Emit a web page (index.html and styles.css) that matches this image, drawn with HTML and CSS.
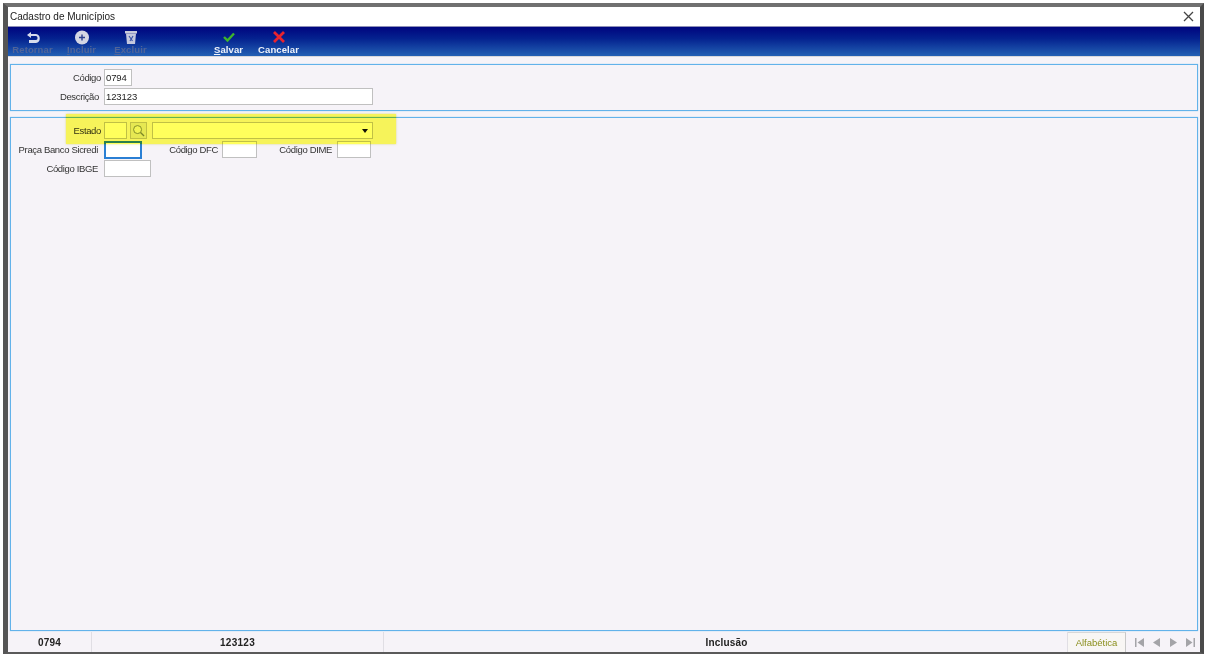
FILE: index.html
```html
<!DOCTYPE html>
<html lang="pt">
<head>
<meta charset="utf-8">
<title>Cadastro de Municípios</title>
<link rel="stylesheet" href="styles.css">
</head>
<body>
<div class="frame">
  <div class="window">
    <header class="titlebar">
      <span>Cadastro de Municípios</span>
      <svg class="close" width="11" height="11" viewBox="0 0 11 11"><path d="M1 1l9 9M10 1l-9 9" stroke="#444" stroke-width="1.300" fill="none"/></svg>
    </header>
    <nav class="toolbar">
      <div class="tool off">
        <svg width="16" height="14" viewBox="0 0 16 14"><path d="M6 1L2 4l4 3V5h5c2 0 2 4 0 4H4v3h7c5 0 5-9 0-9H6z" fill="#d8dcec"/></svg>
        <span>Retornar</span>
      </div>
      <div class="tool off">
        <svg width="16" height="15" viewBox="0 0 16 15"><circle cx="8" cy="7.500" r="7" fill="#d4d6e4"/><path d="M8 4.500v6M5 7.500h6" stroke="#2c3f8e" stroke-width="1.400"/></svg>
        <span><u>I</u>ncluir</span>
      </div>
      <div class="tool off">
        <svg width="14" height="15" viewBox="0 0 14 15"><path d="M1 1h12v2.500H1z" fill="#c8cada"/><path d="M2 3.500h10L11 14H3z" fill="#c4c8de"/><path d="M5 6l3.500 5M9 6l-3 5" stroke="#3b54a8" stroke-width="1.200"/></svg>
        <span><u>E</u>xcluir</span>
      </div>
      <div class="tool-gap"></div>
      <div class="tool on">
        <svg width="14" height="12" viewBox="0 0 14 12"><path d="M2 6l3.500 3.500L12 2.500" stroke="#3fb52c" stroke-width="2.400" fill="none"/></svg>
        <span><u>S</u>alvar</span>
      </div>
      <div class="tool on tool-cancel">
        <svg width="14" height="12" viewBox="0 0 14 12"><path d="M2 1l10 10M12 1L2 11" stroke="#e8232f" stroke-width="2.800" fill="none"/></svg>
        <span>Cancelar</span>
      </div>
    </nav>
    <main class="content">
      <section class="panel panel-top">
        <div class="row">
          <label class="lbl">Código</label>
          <div class="field w-28">0794</div>
        </div>
        <div class="row">
          <label class="lbl lbl-desc">Descrição</label>
          <div class="field w-269">123123</div>
        </div>
      </section>
      <section class="panel panel-main">
        <div class="row">
          <label class="lbl">Estado</label>
          <div class="field w-23"></div>
          <div class="search">
            <svg width="13" height="13" viewBox="0 0 14 14"><circle cx="6" cy="6" r="4.300" fill="#f2f4e6" stroke="#7c8868" stroke-width="1"/><path d="M9.200 9.200l3.800 3.800" stroke="#7c8868" stroke-width="1.400"/></svg>
          </div>
          <div class="combo"><span class="caret"></span></div>
        </div>
        <div class="row">
          <label class="lbl lbl-short">Praça Banco Sicredi</label>
          <div class="field w-38 focused"></div>
          <label class="lbl-dfc">Código DFC</label>
          <div class="field w-35"></div>
          <label class="lbl-dime">Código DIME</label>
          <div class="field w-34"></div>
        </div>
        <div class="row">
          <label class="lbl lbl-short">Código IBGE</label>
          <div class="field w-47"></div>
        </div>
        <div class="highlight"></div>
      </section>
    </main>
    <footer class="status">
      <div class="cell c1">0794</div>
      <div class="cell c2">123123</div>
      <div class="cell c3">Inclusão</div>
      <div class="tab">Alfabética</div>
      <div class="pager">
        <svg width="11" height="9" viewBox="0 0 11 9"><path d="M1 0h1.500v9H1zM10 0v9L3.500 4.500z" fill="#a4a4a8"/></svg>
        <svg width="8" height="9" viewBox="0 0 8 9"><path d="M8 0v9L1 4.500z" fill="#a4a4a8"/></svg>
        <svg class="next" width="8" height="9" viewBox="0 0 8 9"><path d="M0 0v9l7-4.500z" fill="#a4a4a8"/></svg>
        <svg width="11" height="9" viewBox="0 0 11 9"><path d="M1 0v9l6.500-4.500zM8.500 0H10v9H8.500z" fill="#a4a4a8"/></svg>
      </div>
    </footer>
  </div>
</div>
</body>
</html>
```
FILE: styles.css
```css
* { box-sizing: border-box; }
html, body { margin: 0; padding: 0; background: #fff; }
body {
  width: 1206px;
  height: 656px;
  overflow: hidden;
  font-family: "Liberation Sans", Arial, sans-serif;
  font-size: 9.5px;
  color: #333;
}
.frame {
  width: 1206px;
  height: 656px;
  padding: 3px 2px 2px 3px;
  filter: blur(0.4px);
}
.window {
  width: 100%;
  height: 100%;
  display: flex;
  flex-direction: column;
  border-style: solid;
  border-color: #707070 #4a4a4a #5a5a5a #555;
  border-width: 4px 4px 2px 5px;
  background: #f6f3f8;
}
.titlebar {
  height: 20px;
  flex: none;
  background: #fff;
  display: flex;
  align-items: center;
  justify-content: space-between;
  padding: 0 6px 0 2px;
  font-size: 10px;
  color: #222;
  border-bottom: 1px solid #8d8fb8;
}
.toolbar {
  height: 29px;
  flex: none;
  display: flex;
  background: linear-gradient(#00057f 0%, #04228f 40%, #2360b4 100%);
}
.tool {
  width: 49px;
  display: flex;
  flex-direction: column;
  align-items: center;
  justify-content: flex-end;
  padding-bottom: 1px;
  font-size: 9.5px;
  font-weight: 700;
  letter-spacing: 0.1px;
  color: #eef2fb;
}
.tool.off { color: #506499; }
.tool svg { display: block; margin-bottom: -1px; }
.tool.on svg { margin-bottom: 1px; }
.tool-cancel { margin-left: 1px; }
.tool-gap { width: 49px; }
.content {
  flex: 1;
  min-height: 0;
  display: flex;
  flex-direction: column;
  gap: 6px;
  padding: 7px 2px 1px;
  border-top: 1px solid #d8d8dc;
}
.panel {
  border: 1px solid #62b2ea;
  box-shadow: 0 0 1px #8cc8f0;
  background: #f6f3f8;
  display: flex;
  flex-direction: column;
  gap: 2px;
}
.panel-top { height: 47px; padding-top: 4px; flex: none; }
.panel-main { flex: 1; padding-top: 4px; position: relative; }
.row { display: flex; align-items: center; height: 17px; }
.lbl, .lbl-dfc, .lbl-dime {
  text-align: right;
  color: #333;
  white-space: nowrap;
  letter-spacing: -0.35px;
}
.lbl { width: 90px; margin-right: 3px; }
.lbl-desc { width: 88px; margin-right: 5px; }
.lbl-short { width: 87px; margin-right: 6px; }
.lbl-dfc { width: 76px; margin-right: 4px; }
.lbl-dime { width: 75px; margin-right: 5px; }
.field {
  height: 17px;
  background: #fff;
  border: 1px solid #c0c0c0;
  padding: 0 1px;
  line-height: 15px;
  color: #222;
  letter-spacing: -0.1px;
}
.w-23 { width: 23px; }
.w-28 { width: 28px; }
.w-34 { width: 34px; }
.w-35 { width: 35px; }
.w-38 { width: 38px; height: 18px; }
.w-47 { width: 47px; }
.w-269 { width: 269px; }
.focused { border: 2px solid #2a7fd4; }
.search {
  width: 17px;
  height: 17px;
  margin-left: 3px;
  background: #e6e8e4;
  border: 1px solid #c0c0b8;
  display: flex;
  align-items: center;
  justify-content: center;
}
.combo {
  width: 221px;
  height: 17px;
  margin-left: 5px;
  background: #fff;
  border: 1px solid #c0c0c0;
  display: flex;
  align-items: center;
  justify-content: flex-end;
  padding-right: 4px;
}
.caret {
  width: 0;
  height: 0;
  border-left: 3.500px solid transparent;
  border-right: 3.500px solid transparent;
  border-top: 4px solid #111;
}
.highlight {
  position: absolute;
  left: 55px;
  top: -4px;
  width: 330px;
  height: 30px;
  background: #ffff5c;
  mix-blend-mode: multiply;
  box-shadow: 0 0 2px rgba(200, 200, 0, .5);
}
.status {
  height: 20px;
  flex: none;
  display: flex;
  align-items: stretch;
  font-weight: 700;
  font-size: 10px;
  color: #222;
}
.cell {
  display: flex;
  align-items: center;
  justify-content: center;
  border-right: 1px solid #e0dee4;
  letter-spacing: 0.2px;
}
.c1 { width: 84px; }
.c2 { width: 292px; letter-spacing: 0.3px; }
.c3 { width: 684px; padding-left: 2px; }
.tab {
  width: 58px;
  display: flex;
  align-items: center;
  justify-content: center;
  font-weight: 400;
  font-size: 9.500px;
  color: #8a8f1c;
  background: #f8f6f4;
  border-right: 1px solid #c8c8c8;
  border-top: 1px solid #d8d8d8;
}
.pager {
  flex: 1;
  display: flex;
  align-items: center;
  gap: 7px;
  padding-left: 8px;
}
.pager svg { display: block; }
.pager .next { margin-left: 3px; }
```
